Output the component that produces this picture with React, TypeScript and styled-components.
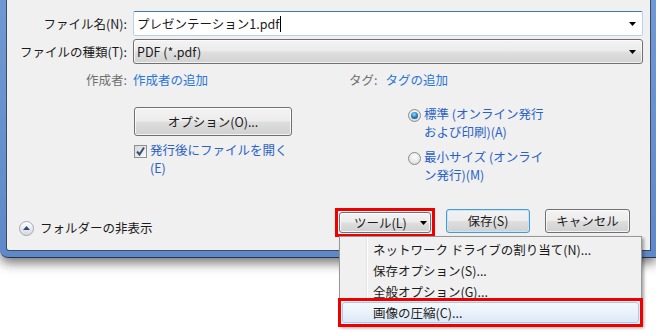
import React from "react";
import styled, { createGlobalStyle } from "styled-components";

const GlobalStyle = createGlobalStyle`
  html, body {
    margin: 0;
    padding: 0;
    background: #fff;
  }
  body {
    font-family: "Noto Sans CJK JP", "Noto Sans", sans-serif;
    font-size: 12.5px;
    line-height: 16px;
    color: #1b1b1b;
  }
`;

const Page = styled.div`
  position: relative;
  width: 656px;
  height: 333px;
  overflow: hidden;
`;

const Frame = styled.div`
  width: 656px;
  box-sizing: border-box;
  padding: 0 5px 6px 6px;
  background: linear-gradient(#6f98d4, #5f88c8);
  border-bottom: 1px solid #24354d;
  border-bottom-left-radius: 8px;
  box-shadow: 0 5px 12px rgba(0, 0, 0, 0.55);
`;

const Pane = styled.div`
  height: 251px;
  box-sizing: border-box;
  display: flex;
  flex-direction: column;
  background: #f0f0f0;
  border: 1px solid #3a4b62;
  border-top: none;
  border-bottom-left-radius: 3px;
`;

const FormGrid = styled.div`
  display: grid;
  grid-template-columns: 120px 1fr;
  column-gap: 6px;
  row-gap: 3px;
  align-items: center;
  padding: 11px 7px 0 0;
`;

const FieldLabel = styled.label`
  text-align: right;
  white-space: nowrap;
`;

const TextCombo = styled.div`
  height: 25px;
  box-sizing: border-box;
  display: flex;
  align-items: center;
  padding: 0 3px 0 3px;
  background: #fff;
  border: 1px solid #b6d1ea;
  border-top-color: #3d7bad;
  border-radius: 2px;
`;

const SelectCombo = styled.div`
  height: 25px;
  box-sizing: border-box;
  display: flex;
  align-items: center;
  padding: 0 3px 0 3px;
  border: 1px solid #707070;
  border-radius: 3px;
  background: linear-gradient(#f3f3f3 0%, #ececec 45%, #dedede 55%, #d2d2d2 100%);
  box-shadow: inset 0 0 0 1px rgba(255, 255, 255, 0.7);
`;

const Caret = styled.span`
  display: inline-block;
  width: 1px;
  height: 16px;
  margin-left: 1px;
  background: #000;
  vertical-align: middle;
`;

const Value = styled.span`
  white-space: nowrap;
`;

const DropArrow = styled.svg`
  margin-left: auto;
  margin-right: 3px;
  flex: none;
`;

const MetaRow = styled.div`
  display: grid;
  grid-template-columns: 120px 210px auto;
  column-gap: 6px;
  margin-top: 8px;
`;

const MetaLabel = styled.span`
  color: #707070;
  text-align: right;
  white-space: nowrap;
`;

const MetaLink = styled.span`
  color: #2b76d6;
  white-space: nowrap;
`;

const TagPair = styled.div`
  display: flex;
  gap: 8px;
`;

const Options = styled.div`
  display: grid;
  grid-template-columns: 274px auto;
  padding-left: 127px;
  margin-top: 17px;
`;

const OptionsColumn = styled.div`
  display: flex;
  flex-direction: column;
  align-items: flex-start;
  padding-top: 2px;
`;

const PushButton = styled.button<{ $w: number; $h?: number; $default?: boolean }>`
  box-sizing: border-box;
  width: ${(p) => p.$w}px;
  height: ${(p) => p.$h ?? 24}px;
  padding: 0;
  font: inherit;
  color: #1b1b1b;
  border: 1px solid ${(p) => (p.$default ? "#4a98d4" : "#707070")};
  border-radius: 3px;
  background: linear-gradient(#f3f3f3 0%, #ececec 48%, #dedede 52%, #d0d0d0 100%);
  box-shadow: inset 0 0 0 1px ${(p) => (p.$default ? "#bfe8fb" : "rgba(255, 255, 255, 0.75)")};
  display: flex;
  align-items: center;
  justify-content: center;
`;

const CheckRow = styled.div`
  display: flex;
  gap: 3px;
  margin-top: 5px;
  line-height: 18px;
  color: #2962c6;
`;

const CheckBox = styled.span`
  flex: none;
  width: 13px;
  height: 13px;
  box-sizing: border-box;
  margin-top: 4px;
  border: 1px solid #8e8f8f;
  background: linear-gradient(135deg, #d8d8d8, #f9f9f9);
  display: flex;
  align-items: center;
  justify-content: center;
`;

const RadioList = styled.div`
  display: flex;
  flex-direction: column;
  gap: 7px;
`;

const RadioRow = styled.div`
  display: flex;
  gap: 3px;
  line-height: 18px;
  color: #2962c6;
  white-space: nowrap;
`;

const Radio = styled.span<{ $checked?: boolean }>`
  position: relative;
  flex: none;
  width: 13px;
  height: 13px;
  box-sizing: border-box;
  margin-top: 4px;
  border-radius: 50%;
  border: 1px solid #8a8a8a;
  background: radial-gradient(circle at 50% 35%, #ffffff 0%, #e6e6e6 60%, #cfcfcf 100%);

  &::after {
    content: "";
    display: ${(p) => (p.$checked ? "block" : "none")};
    position: absolute;
    left: 2px;
    top: 2px;
    width: 7px;
    height: 7px;
    border-radius: 50%;
    background: radial-gradient(circle at 45% 35%, #9be2fb 0%, #2a86c2 45%, #0b3d69 100%);
  }
`;

const BottomBar = styled.div`
  margin-top: auto;
  display: flex;
  align-items: flex-start;
  padding: 0 20px 13px 12px;
`;

const FolderToggle = styled.div`
  display: flex;
  align-items: center;
  gap: 6px;
  margin-top: 12px;
  white-space: nowrap;
`;

const Spacer = styled.div`
  flex: 1;
`;

const Marked = styled.div`
  border: 3px solid #ee0000;
  padding: 1px;
  margin-right: 11px;
`;

const ToolsButton = styled(PushButton)`
  justify-content: flex-start;
  padding-left: 14px;
  gap: 13px;
`;

const DialogButtons = styled.div`
  display: flex;
  gap: 15px;
  margin-top: 1px;
`;

const Menu = styled.div`
  position: absolute;
  left: 339px;
  top: 236px;
  width: 303px;
  box-sizing: border-box;
  padding: 2px;
  border: 1px solid #979797;
  background: linear-gradient(
    to right,
    #f0f0f0 0 26px,
    #e2e3e3 26px 27px,
    #ffffff 27px 28px,
    #f0f0f0 28px
  );
  box-shadow: 2px 2px 3px rgba(0, 0, 0, 0.35);
`;

const MenuItem = styled.div<{ $active?: boolean }>`
  position: relative;
  height: 21px;
  box-sizing: border-box;
  display: flex;
  align-items: center;
  padding-left: 30px;
  white-space: nowrap;
  border: 1px solid ${(p) => (p.$active ? "#a9cbf2" : "transparent")};
  border-radius: 3px;
  background: ${(p) => (p.$active ? "linear-gradient(#f5f9fd, #dde9f7)" : "transparent")};

  &::after {
    content: "";
    display: ${(p) => (p.$active ? "block" : "none")};
    position: absolute;
    inset: -5px -5px -5px -5px;
    border: 3px solid #ee0000;
  }
`;

const Arrow = () => (
  <DropArrow width="7" height="4" viewBox="0 0 7 4">
    <polygon points="0,0 7,0 3.5,4" fill="#000" />
  </DropArrow>
);

export default function App() {
  return (
    <Page>
      <GlobalStyle />
      <Frame>
        <Pane>
          <FormGrid>
            <FieldLabel>ファイル名(N):</FieldLabel>
            <TextCombo>
              <Value>プレゼンテーション1.pdf</Value>
              <Caret />
              <Arrow />
            </TextCombo>
            <FieldLabel>ファイルの種類(T):</FieldLabel>
            <SelectCombo>
              <Value>PDF (*.pdf)</Value>
              <Arrow />
            </SelectCombo>
          </FormGrid>

          <MetaRow>
            <MetaLabel>作成者:</MetaLabel>
            <MetaLink>作成者の追加</MetaLink>
            <TagPair>
              <MetaLabel>タグ:</MetaLabel>
              <MetaLink>タグの追加</MetaLink>
            </TagPair>
          </MetaRow>

          <Options>
            <OptionsColumn>
              <PushButton $w={158} $h={29}>オプション(O)...</PushButton>
              <CheckRow>
                <CheckBox>
                  <svg width="11" height="11" viewBox="0 0 11 11">
                    <path d="M2 5.5 L4.5 8.5 L9 1.5" fill="none" stroke="#3a4f78" strokeWidth="2" />
                  </svg>
                </CheckBox>
                <span>
                  発行後にファイルを開く
                  <br />
                  (E)
                </span>
              </CheckRow>
            </OptionsColumn>
            <RadioList>
              <RadioRow>
                <Radio $checked />
                <span>
                  標準 (オンライン発行
                  <br />
                  および印刷)(A)
                </span>
              </RadioRow>
              <RadioRow>
                <Radio />
                <span>
                  最小サイズ (オンライ
                  <br />
                  ン発行)(M)
                </span>
              </RadioRow>
            </RadioList>
          </Options>

          <BottomBar>
            <FolderToggle>
              <svg width="15" height="15" viewBox="0 0 15 15">
                <defs>
                  <linearGradient id="tg" x1="0" y1="0" x2="0" y2="1">
                    <stop offset="0" stopColor="#ffffff" />
                    <stop offset="1" stopColor="#d4d8de" />
                  </linearGradient>
                </defs>
                <circle cx="7.5" cy="7.5" r="7" fill="url(#tg)" stroke="#a3a8b0" />
                <polygon points="4,9 11,9 7.5,5" fill="#2c4a80" />
              </svg>
              <span>フォルダーの非表示</span>
            </FolderToggle>
            <Spacer />
            <Marked>
              <ToolsButton $w={92} $h={21}>
                <span>ツール(L)</span>
                <svg width="7" height="4" viewBox="0 0 7 4">
                  <polygon points="0,0 7,0 3.5,4" fill="#000" />
                </svg>
              </ToolsButton>
            </Marked>
            <DialogButtons>
              <PushButton $w={84} $default>
                保存(S)
              </PushButton>
              <PushButton $w={85}>キャンセル</PushButton>
            </DialogButtons>
          </BottomBar>
        </Pane>
      </Frame>

      <Menu>
        <MenuItem>ネットワーク ドライブの割り当て(N)...</MenuItem>
        <MenuItem>保存オプション(S)...</MenuItem>
        <MenuItem>全般オプション(G)...</MenuItem>
        <MenuItem $active>画像の圧縮(C)...</MenuItem>
      </Menu>
    </Page>
  );
}
